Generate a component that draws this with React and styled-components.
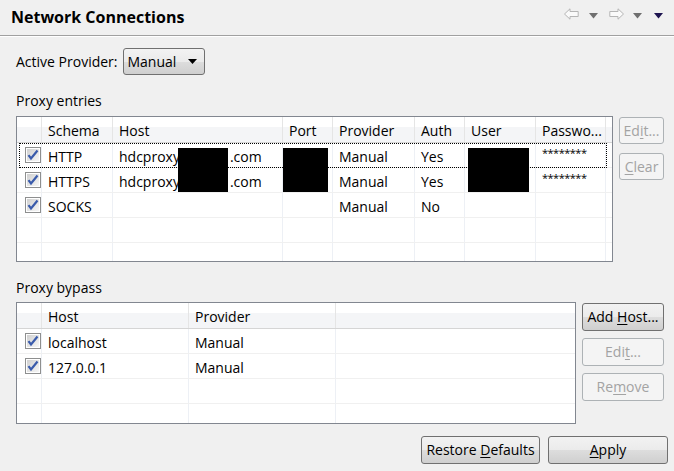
import React from "react";
import styled, { createGlobalStyle } from "styled-components";

const Global = createGlobalStyle`
  html, body { margin: 0; padding: 0; }
  body {
    background: #f0f0f0;
    font-family: "Open Sans", "Noto Sans", sans-serif;
    font-size: 14px;
    color: #000;
    width: 674px;
    height: 471px;
    overflow: hidden;
  }
`;

const Page = styled.div`
  width: 674px;
  height: 471px;
  display: flex;
  flex-direction: column;
`;

const Header = styled.div`
  height: 36px;
  box-sizing: border-box;
  border-bottom: 1px solid #a0a0a0;
  box-shadow: 0 1px 0 #ffffff;
  display: flex;
  align-items: center;
  justify-content: space-between;
  padding: 0 10px 2px 11px;
`;

const Title = styled.div`
  font-weight: 700;
  font-size: 16px;
`;

const Nav = styled.div`
  display: flex;
  align-items: center;
  margin-top: -6px;
`;

const NavIcon = styled.svg`
  display: block;
  margin-left: ${(p) => p.$ml || 0}px;
`;

const Content = styled.div`
  flex: 1;
  padding: 11px 6px 0 16px;
  display: flex;
  flex-direction: column;
`;

const ProviderRow = styled.div`
  display: flex;
  align-items: center;
  gap: 5px;
  height: 28px;
`;

const Combo = styled.div`
  width: 82px;
  height: 27px;
  box-sizing: border-box;
  border: 1px solid #707070;
  border-radius: 3px;
  background: linear-gradient(#f2f2f2 0%, #ebebeb 50%, #dddddd 51%, #cfcfcf 100%);
  display: flex;
  align-items: center;
  justify-content: space-between;
  padding: 0 7px 0 4px;
`;

const SectionLabel = styled.div`
  margin-top: ${(p) => p.$mt || 0}px;
  height: 20px;
  line-height: 20px;
`;

const TableArea = styled.div`
  display: flex;
  align-items: flex-start;
  gap: 6px;
  margin-top: ${(p) => p.$mt || 0}px;
`;

const TableBox = styled.div`
  width: ${(p) => p.$w}px;
  height: ${(p) => p.$h}px;
  box-sizing: border-box;
  border: 1px solid #828790;
  background: #fff;
  overflow: hidden;
  position: relative;
`;

const HeadRow = styled.div`
  display: flex;
  height: 26px;
  box-sizing: border-box;
  border-bottom: 1px solid #d5d5d5;
  background: linear-gradient(#ffffff 0%, #ffffff 40%, #f4f5f7 41%, #f4f5f7 100%);
`;

const HeadCell = styled.div`
  width: ${(p) => (p.$w ? `${p.$w}px` : "auto")};
  flex: ${(p) => (p.$w ? "none" : "1")};
  box-sizing: border-box;
  border-right: ${(p) => (p.$w ? "1px solid #e5e5e5" : "none")};
  padding: 2px 0 0 6px;
  line-height: 24px;
  white-space: nowrap;
  overflow: hidden;
`;

const BodyRow = styled.div`
  display: flex;
  height: 25px;
  box-sizing: border-box;
  border-bottom: 1px solid #f0f0f0;
  position: relative;
`;

const Cell = styled.div`
  width: ${(p) => (p.$w ? `${p.$w}px` : "auto")};
  flex: ${(p) => (p.$w ? "none" : "1")};
  box-sizing: border-box;
  border-right: ${(p) => (p.$w ? "1px solid #edf0f5" : "none")};
  padding-left: ${(p) => (p.$check ? 8 : 6)}px;
  line-height: ${(p) => (p.$stars ? 20 : 27)}px;
  font-size: ${(p) => (p.$stars ? 11 : 14)}px;
  letter-spacing: ${(p) => (p.$stars ? "-0.5px" : "0")};
  white-space: nowrap;
  overflow: hidden;
  display: flex;
  align-items: ${(p) => (p.$check ? "center" : "flex-start")};
`;

const Gap = styled.span`
  display: inline-block;
  width: ${(p) => p.$w}px;
`;

const Focus = styled.div`
  position: absolute;
  left: 2px;
  top: 0;
  width: ${(p) => p.$w}px;
  height: 25px;
  box-sizing: border-box;
  border: 1px dotted #000;
  pointer-events: none;
`;

const Redact = styled.div`
  position: absolute;
  background: #000;
`;

const ButtonCol = styled.div`
  display: flex;
  flex-direction: column;
  gap: ${(p) => p.$gap || 7}px;
  margin-top: 1px;
`;

const Button = styled.div`
  width: ${(p) => p.$w}px;
  height: ${(p) => p.$h || 27}px;
  box-sizing: border-box;
  border-radius: 3px;
  border: 1px solid ${(p) => (p.$disabled ? "#adb2b5" : "#707070")};
  background: ${(p) =>
    p.$disabled
      ? "#f4f4f4"
      : "linear-gradient(#f2f2f2 0%, #ebebeb 50%, #dddddd 51%, #cfcfcf 100%)"};
  color: ${(p) => (p.$disabled ? "#a3a3a3" : "#000")};
  display: flex;
  align-items: center;
  justify-content: center;
  white-space: pre;
  padding-bottom: 1px;
`;

const Footer = styled.div`
  display: flex;
  justify-content: flex-end;
  gap: 8px;
  margin-top: 12px;
`;

const U = styled.span`
  text-decoration: underline;
  text-underline-offset: 2px;
`;

const Check = () => (
  <svg width="16" height="16" viewBox="0 0 16 16">
    <defs>
      <linearGradient id="cbg" x1="0" y1="0" x2="1" y2="1">
        <stop offset="0" stopColor="#d0d0d0" />
        <stop offset="1" stopColor="#f6f6f6" />
      </linearGradient>
    </defs>
    <rect x="0.5" y="0.5" width="15" height="15" fill="#fff" stroke="#8e8f8f" />
    <rect x="2" y="2" width="12" height="12" fill="url(#cbg)" />
    <path d="M3.5 8.2 L6 11.5 L12.5 3.5" fill="none" stroke="#3a5bab" strokeWidth="2.2" />
  </svg>
);

const Arrow = ({ dark }) => (
  <svg width="10" height="6" viewBox="0 0 10 6">
    <path d="M0 0 H9 L4.5 5.5 Z" fill={dark ? "#1e1450" : "#6f6f6f"} />
  </svg>
);

const HostVal = () => (
  <span>
    hdcproxy<Gap $w={50} />.com
  </span>
);

const entryCols = [25, 71, 170, 50, 82, 50, 71, 70, null];
const entryHeads = ["", "Schema", "Host", "Port", "Provider", "Auth", "User", "Passwo...", ""];
const entryRows = [
  ["HTTP", <HostVal />, "", "Manual", "Yes", "", "********"],
  ["HTTPS", <HostVal />, "", "Manual", "Yes", "", "********"],
  ["SOCKS", "", "", "Manual", "No", "", ""],
  null,
  null,
];

const bypassCols = [25, 147, 147, null];
const bypassHeads = ["", "Host", "Provider", ""];
const bypassRows = [["localhost", "Manual"], ["127.0.0.1", "Manual"], null, null];

function Grid({ cols, heads, rows, w, h, focusW, children }) {
  return (
    <TableBox $w={w} $h={h}>
      <HeadRow>
        {cols.map((c, i) => (
          <HeadCell key={i} $w={c}>
            {heads[i]}
          </HeadCell>
        ))}
      </HeadRow>
      {rows.map((r, ri) => (
        <BodyRow key={ri}>
          {cols.map((c, ci) => {
            if (ci === 0)
              return (
                <Cell key={ci} $w={c} $check>
                  {r ? <Check /> : null}
                </Cell>
              );
            const v = r ? r[ci - 1] || "" : "";
            const stars = typeof v === "string" && v.startsWith("*");
            return (
              <Cell key={ci} $w={c} $stars={stars}>
                {v}
              </Cell>
            );
          })}
          {ri === 0 && focusW ? <Focus $w={focusW} /> : null}
        </BodyRow>
      ))}
      {children}
    </TableBox>
  );
}

export default function App() {
  return (
    <Page>
      <Global />
      <Header>
        <Title>Network Connections</Title>
        <Nav>
          <NavIcon width="15" height="12" viewBox="0 0 15 12">
            <path d="M0.5 6 L6 0.8 V3.5 H14.2 V8.5 H6 V11.2 Z" fill="#fafafa" stroke="#b5b5b5" />
          </NavIcon>
          <NavIcon as="div" $ml={10}><Arrow /></NavIcon>
          <NavIcon width="15" height="12" viewBox="0 0 15 12" $ml={10}>
            <path d="M14.5 6 L9 0.8 V3.5 H0.8 V8.5 H9 V11.2 Z" fill="#fafafa" stroke="#b5b5b5" />
          </NavIcon>
          <NavIcon as="div" $ml={9}><Arrow /></NavIcon>
          <NavIcon as="div" $ml={11}><Arrow dark /></NavIcon>
        </Nav>
      </Header>
      <Content>
        <ProviderRow>
          <span>Active Provider:</span>
          <Combo>
            <span>Manual</span>
            <svg width="9" height="5" viewBox="0 0 9 5">
              <path d="M0 0 H9 L4.5 5 Z" fill="#000" />
            </svg>
          </Combo>
        </ProviderRow>
        <SectionLabel $mt={16}>Proxy entries</SectionLabel>
        <TableArea $mt={5}>
          <Grid cols={entryCols} heads={entryHeads} rows={entryRows} w={597} h={146} focusW={588}>
            <Redact style={{ left: 161, top: 31, width: 50, height: 44 }} />
            <Redact style={{ left: 266, top: 31, width: 45, height: 44 }} />
            <Redact style={{ left: 451, top: 31, width: 61, height: 44 }} />
          </Grid>
          <ButtonCol $gap={9}>
            <Button $w={45} $h={27} $disabled>
              <span>Ed<U>i</U>t...</span>
            </Button>
            <Button $w={45} $h={27} $disabled>
              <span><U>C</U>lear</span>
            </Button>
          </ButtonCol>
        </TableArea>
        <SectionLabel $mt={16}>Proxy bypass</SectionLabel>
        <TableArea $mt={4}>
          <Grid cols={bypassCols} heads={bypassHeads} rows={bypassRows} w={560} h={122} />
          <ButtonCol $gap={7}>
            <Button $w={82} $h={28}>
              <span>Add <U>H</U>ost...</span>
            </Button>
            <Button $w={82} $h={28} $disabled>
              <span>Edi<U>t</U>...</span>
            </Button>
            <Button $w={82} $h={28} $disabled>
              <span>Re<U>m</U>ove</span>
            </Button>
          </ButtonCol>
        </TableArea>
        <Footer>
          <Button $w={119} $h={28}>
            <span>Restore <U>D</U>efaults</span>
          </Button>
          <Button $w={120} $h={28}>
            <span><U>A</U>pply</span>
          </Button>
        </Footer>
      </Content>
    </Page>
  );
}
